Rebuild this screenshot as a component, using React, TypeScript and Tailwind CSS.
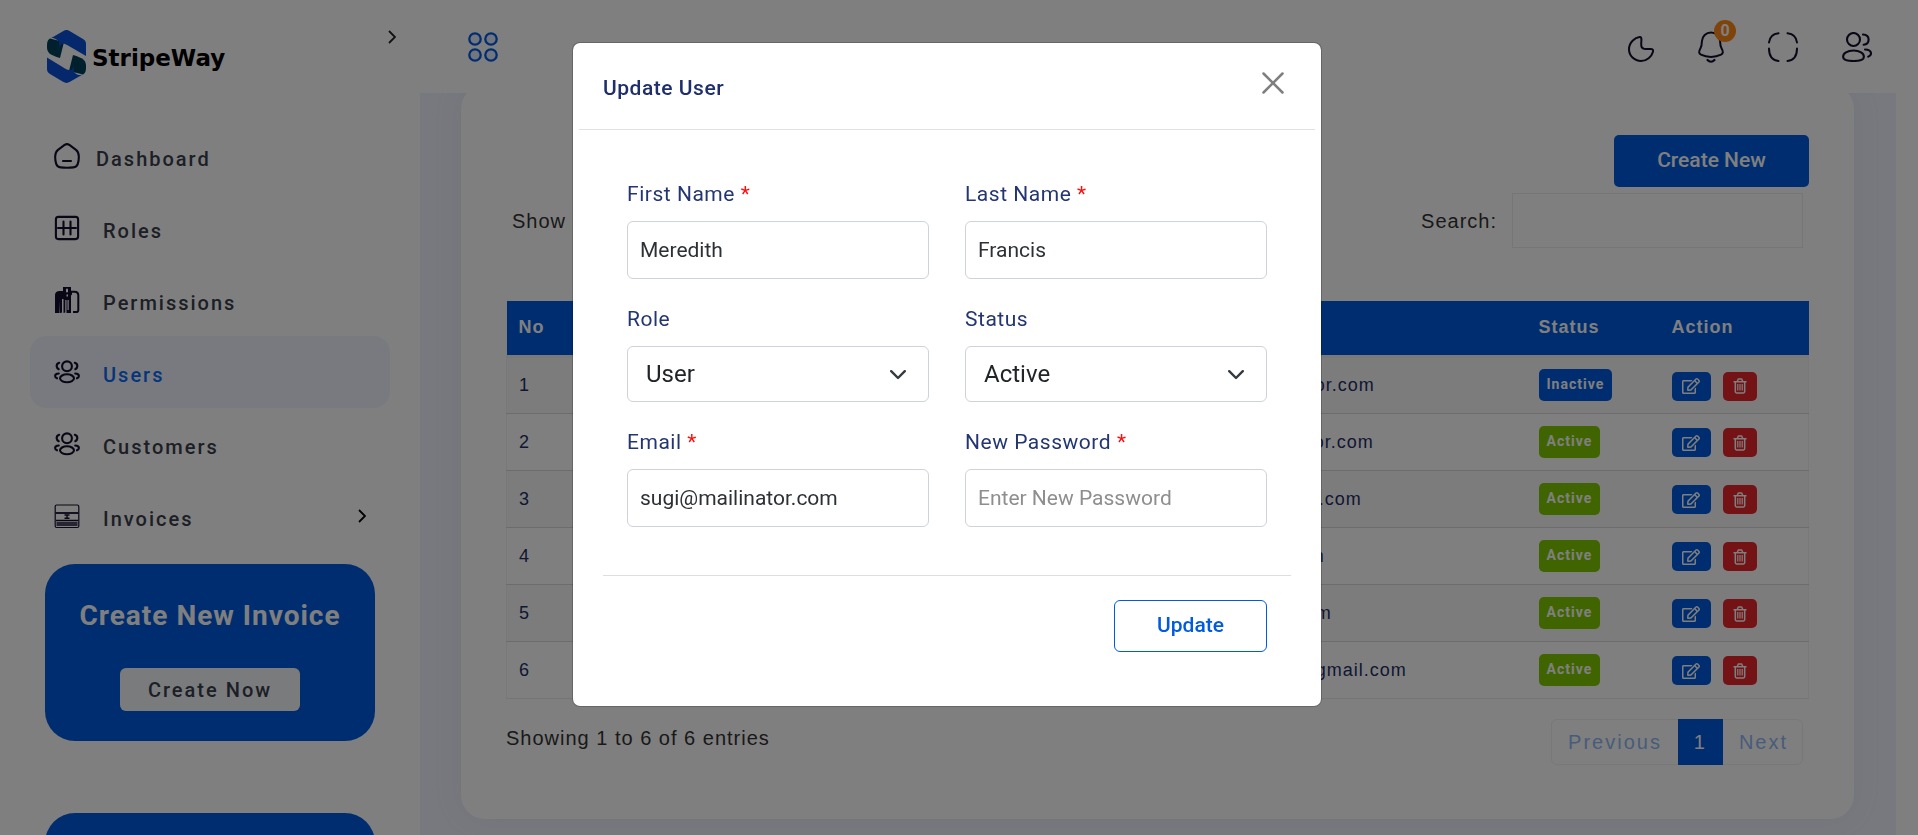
import { useState } from "react";
import clsx from "clsx";
import { FaRegEdit } from "react-icons/fa";

type IconProps = { className?: string };

const HomeIcon = ({ className }: IconProps) => (
  <svg viewBox="0 0 26 26" fill="none" stroke="currentColor" strokeWidth="2.1" className={className}>
    <path d="M10.6 1.9 4 6.8C2.2 8.2 1.3 10.4 1.2 13.2c-.1 2.3.2 5.2 1 7.7.8 2.4 2 3.3 4.4 3.5 4.2.4 8.6.4 12.8 0 2.4-.2 3.6-1.1 4.4-3.5.8-2.5 1.1-5.4 1-7.7-.1-2.8-1-5-2.800-6.400l-6.600-4.900c-1.600-1-3.200-1-4.800 0Z" />
    <path d="M9 18h8" strokeLinecap="round" />
  </svg>
);

const GridIcon = ({ className }: IconProps) => (
  <svg viewBox="0 0 26 26" fill="none" stroke="currentColor" strokeWidth="2.1" className={className}>
    <rect x="1.9" y="1.9" width="22.2" height="22.2" rx="2.5" />
    <path d="M4 13h18M9.500 6.500v13M16.500 6.500v13" strokeLinecap="round" />
  </svg>
);

const PermissionIcon = ({ className }: IconProps) => (
  <svg viewBox="0 0 26 26" fill="none" stroke="currentColor" strokeWidth="1.8" className={className}>
    <path d="M1 26V8c0-2.500 2-4 4.500-4H9V0h8v4h1v4.500l-1-1V26h-4.500V13h-1.200v12.500L9.500 26V12H8v13.500L6.500 26h-1V14l-.5 12Z" fill="currentColor" stroke="none" />
    <path d="M17 4.800h3.700c2.300 0 3.600 1.300 3.600 3.500v15c0 1-.8 1.800-1.800 1.800H19" strokeWidth="2" />
    <path d="M12 1.800h2v3.400h-2zM12.500 7.500h1.500v2h-1.500zM13.500 13h1.200v10h-1.200z" fill="#fff" stroke="none" />
  </svg>
);

const PeopleIcon = ({ className }: IconProps) => (
  <svg viewBox="0 0 26 24" fill="none" stroke="currentColor" strokeWidth="2.1" strokeLinecap="round" className={className}>
    <circle cx="13" cy="6.300" r="4.900" />
    <ellipse cx="13" cy="18.300" rx="7" ry="4" />
    <path d="M5.200 2.800C3.200 3.500 2.500 5 2.700 6.500s1 2.200 2 2.700M20.800 2.800c2 .7 2.700 2.200 2.500 3.700s-1 2.200-2 2.700" />
    <path d="M4.800 13.500c-2.300.1-3.700 1.200-3.700 2.500 0 1.200.8 1.900 1.900 2.300M21.200 13.500c2.300.1 3.700 1.200 3.700 2.500 0 1.200-.8 1.900-1.900 2.300" />
  </svg>
);

const InvoiceIcon = ({ className }: IconProps) => (
  <svg viewBox="0 0 26 26" fill="none" stroke="currentColor" strokeWidth="1.2" className={className}>
    <rect x="1.200" y="2" width="23.600" height="22.500" rx="1.500" />
    <path d="M1.500 10h23" strokeWidth="1.800" />
    <path d="M10.500 12h5M13 12v3M10.500 15.200h5M2 17.500h22M2.500 20h21M2.500 22h21" strokeWidth="1.400" />
  </svg>
);

const AppsIcon = ({ className }: IconProps) => (
  <svg viewBox="0 0 30 30" fill="#e9edff" stroke="currentColor" strokeWidth="2.300" className={className}>
    <circle cx="7" cy="7" r="5.700" />
    <circle cx="23" cy="7" r="5.700" />
    <circle cx="7" cy="23" r="5.700" />
    <circle cx="23" cy="23" r="5.700" />
  </svg>
);

const MoonIcon = ({ className }: IconProps) => (
  <svg viewBox="0 0 26 26" fill="none" stroke="currentColor" strokeWidth="2" strokeLinejoin="round" className={className}>
    <path d="M11.600 1C7 1.500 1 6.400 1 13.200c0 6.600 5.300 11.800 12.100 11.800 5.600 0 10.600-4.400 11.900-9.200.5-2-.5-2.900-2.300-2.900-2.400.1-4.200.2-6.700-.2-2-.4-2.600-1.200-2.700-3-.2-1.800 0-3.700.1-5.700.1-2.200-.3-3.100-1.800-3Z" />
  </svg>
);

const BellIcon = ({ className }: IconProps) => (
  <svg viewBox="0 0 26 32" fill="none" stroke="currentColor" strokeWidth="2" strokeLinecap="round" className={className}>
    <path d="M13 1.500c-5 0-8.800 3.800-9.100 8.700-.1 3.300-.1 4.800-1.300 6.900C.5 20.800.8 22.500 3 23.700c5.900 3 14.100 3 20 0 2.200-1.200 2.500-2.900.4-6.600-1.200-2.100-1.200-3.600-1.300-6.900C21.800 5.300 18 1.500 13 1.500Z" />
    <path d="M9.500 29c2 2.300 5 2.300 7 0" strokeWidth="2.200" />
  </svg>
);

const FullscreenIcon = ({ className }: IconProps) => (
  <svg viewBox="0 0 30 30" fill="none" stroke="currentColor" strokeWidth="2" strokeLinecap="round" className={className}>
    <path d="M10.500 1.200C5 1.800 1.600 5 1 10.500M19.500 1.200C25 1.800 28.400 5 29 10.500M1 16.500c0 7.500 3 11.800 9.500 12.400M29 16.500c0 7.500-3 11.800-9.500 12.400" />
  </svg>
);

const AccountIcon = ({ className }: IconProps) => (
  <svg viewBox="0 0 30 30" fill="none" stroke="currentColor" strokeWidth="2.100" strokeLinecap="round" className={className}>
    <circle cx="11.500" cy="7.500" r="6.500" />
    <path d="M11.500 18.500c-6.200 0-10.400 2.700-10.400 6.200 0 3.200 3.500 4.300 10.400 4.300s10.400-1.100 10.400-4.300c0-3.500-4.200-6.200-10.400-6.200Z" />
    <path d="M21 2.500c3.600.2 5.600 2.300 5.600 5.100 0 2.900-2 5-5 5.200M23 17.500c3.800.1 6 1.600 6 4.100 0 1.500-1 2.700-2.800 3.200" />
  </svg>
);

const TrashIcon = ({ className }: IconProps) => (
  <svg viewBox="0 0 14 16" fill="none" stroke="currentColor" strokeWidth="1.500" className={className}>
    <path d="M.5 3.700h13M2.300 3.700v9.800c0 .9.500 1.400 1.200 1.400h7c.7 0 1.200-.5 1.200-1.400V3.700M4.300 3.500l.8-2.200c.1-.3.300-.4.600-.4h2.600c.3 0 .5.1.6.4l.8 2.200" />
    <path d="M4.800 6v6.500M7 6v6.500M9.200 6v6.500" strokeWidth="1.200" />
  </svg>
);

const Chevron = ({ className }: IconProps) => (
  <svg viewBox="0 0 8 14" fill="none" stroke="currentColor" strokeWidth="1.800" className={className}>
    <path d="m1 1 6 6-6 6" />
  </svg>
);

const Logo = () => (
  <a href="#" className="flex items-center gap-1.5">
    <svg viewBox="0 0 39 53" className="h-[53px] w-[39px]">
      <path d="M3 8.500C0 10.500 0 13 0 17c0 6 3 8 13 11L17 12Z" fill="#01415c" />
      <path d="M36 44.500c3-2 3-4.500 3-8.500 0-6-3-8-13-11l-4 16Z" fill="#01415c" />
      <path d="M2.500 9 16 1.200c2.400-1.500 4.600-1.500 7 0L36 9c2 1.200 3 2.700 3 5v12L21 15.500c-5-3-8-2-8.500 3L12 12C8 7.500 5 7.500 2.500 9Z" fill="#0a4fd6" />
      <path d="M36.500 44 23 51.800c-2.400 1.500-4.600 1.500-7 0L3 44c-2-1.200-3-2.700-3-5V27.500L18 38.500c5 3 8 2 8.500-3l.5 6.500c4 4 7 3.500 9.500 2Z" fill="#0a4fd6" />
    </svg>
    <span className="pt-1 font-['DejaVu_Sans'] text-[23px] leading-none font-bold text-black">StripeWay</span>
  </a>
);

const navItems = [
  { label: "Dashboard", icon: HomeIcon, wide: false },
  { label: "Roles", icon: GridIcon, wide: true },
  { label: "Permissions", icon: PermissionIcon, wide: true },
  { label: "Users", icon: PeopleIcon, wide: true },
  { label: "Customers", icon: PeopleIcon, wide: true },
  { label: "Invoices", icon: InvoiceIcon, wide: true, more: true },
];

const users = [
  { name: "Kyra Boyd", role: "User", email: "kyra@mailinator.com", active: false },
  { name: "Meredith Francis", role: "User", email: "sugi@mailinator.com", active: true },
  { name: "Sly Moore", role: "User", email: "sly@mailinator.com", active: true },
  { name: "Lee Grant", role: "User", email: "lee@gmail.com", active: true },
  { name: "Lara Quinn", role: "User", email: "lara@gmail.com", active: true },
  { name: "Customer Lee", role: "User", email: "customerlee@gmail.com", active: true },
];

const InvoiceCard = () => (
  <div className="flex shrink-0 flex-col items-center rounded-[30px] bg-[#005be0] pt-[34px] pb-[30px]">
    <h3 className="text-[28px] leading-9 font-bold tracking-[1px] text-white">Create New Invoice</h3>
    <button className="mt-[34px] h-[43px] w-[180px] rounded-md bg-[#f5f6fb] text-xl font-medium tracking-[2px] text-[#3a3e4c]">
      Create Now
    </button>
  </div>
);

const Sidebar = () => (
  <aside className="flex w-[420px] shrink-0 flex-col overflow-hidden bg-white">
    <div className="flex items-start justify-between pt-[30px] pr-6 pl-[47px]">
      <Logo />
      <button aria-label="Collapse menu" className="text-[#222]">
        <Chevron className="h-[14px] w-2" />
      </button>
    </div>

    <nav className="mt-[37px] px-[30px]">
      {navItems.map(({ label, icon: Icon, wide, more }) => (
        <a
          key={label}
          href="#"
          className={clsx(
            "flex h-[72px] items-center rounded-2xl px-6 text-xl font-medium tracking-[2px]",
            label === "Users" ? "bg-[#f3f5fe] text-[#0c6bf5]" : "text-[#3a3e4c]",
          )}
        >
          <Icon className="size-[26px] text-[#120f2d]" />
          <span className={clsx("mt-1.5", wide ? "ml-[23px]" : "ml-4")}>{label}</span>
          {more && <Chevron className="ml-auto h-[14px] w-2 text-black" />}
        </a>
      ))}
    </nav>

    <div className="mt-3 flex flex-col gap-[72px] px-[45px]">
      <InvoiceCard />
      <InvoiceCard />
    </div>
  </aside>
);

const Topbar = () => (
  <header className="relative z-10 flex h-[93px] shrink-0 items-center justify-between bg-white pr-[46px] pl-12 text-[#120f2d]">
    <button aria-label="Apps" className="text-[#005be0]">
      <AppsIcon className="size-[30px]" />
    </button>
    <div className="flex items-center gap-11">
      <button aria-label="Dark mode" className="pt-1">
        <MoonIcon className="size-[26px]" />
      </button>
      <button aria-label="Notifications" className="relative">
        <BellIcon className="h-8 w-[26px]" />
        <span className="absolute -top-[11px] left-4 flex size-[22px] items-center justify-center rounded-full bg-[#ff8819] text-base font-bold text-white">
          0
        </span>
      </button>
      <button aria-label="Full screen">
        <FullscreenIcon className="size-[30px]" />
      </button>
      <button aria-label="Account">
        <AccountIcon className="size-[30px]" />
      </button>
    </div>
  </header>
);

const UsersTable = () => (
  <table className="mt-[53px] w-full table-fixed border-collapse text-left text-lg tracking-[1px] text-[#1f2f66]">
    <colgroup>
      <col className="w-[90px]" />
      <col />
      <col className="w-[160px]" />
      <col className="w-[351px]" />
      <col className="w-[133px]" />
      <col className="w-[149px]" />
    </colgroup>
    <thead>
      <tr className="h-[55px] bg-[#005be0] text-white">
        {["No", "Name", "Role", "Email", "Status", "Action"].map((head) => (
          <th key={head} className="px-3 pb-0.5 font-bold">
            {head}
          </th>
        ))}
      </tr>
    </thead>
    <tbody className="border-x border-t-3 border-[#f2f2f2]">
      {users.map((user, i) => (
        <tr key={user.email} className="h-[57px] border-b border-[#d8d8d8] odd:bg-[#f9f9f9] last:border-[#ebebeb]">
          <td className="px-3">{i + 1}</td>
          <td className="px-3">{user.name}</td>
          <td className="px-3">{user.role}</td>
          <td className="px-3">{user.email}</td>
          <td className="px-3">
            <span
              className={clsx(
                "inline-block h-8 rounded-[5px] px-2 align-middle font-['Roboto',sans-serif] text-sm leading-[30px] font-bold text-white",
                user.active ? "bg-[#7fc900]" : "bg-[#005be0]",
              )}
            >
              {user.active ? "Active" : "Inactive"}
            </span>
          </td>
          <td className="px-3">
            <div className="flex gap-3 pt-0.5">
              <button
                aria-label={`Edit user ${i + 1}`}
                className="flex h-[29px] w-[39px] items-center justify-center rounded-[5px] bg-[#005be0] text-white"
              >
                <FaRegEdit className="size-[18px]" />
              </button>
              <button
                aria-label={`Delete user ${i + 1}`}
                className="flex h-[29px] w-[34px] items-center justify-center rounded-[5px] bg-[#e8262b] text-white"
              >
                <TrashIcon className="h-4 w-[14px]" />
              </button>
            </div>
          </td>
        </tr>
      ))}
    </tbody>
  </table>
);

const UsersCard = () => (
  <section className="-mt-2 rounded-3xl bg-white px-[45px] pt-[50px] pb-[54px] font-['Liberation_Sans',sans-serif] text-xl tracking-[1px] text-[#333] shadow-[0_0_30px_#e6e8f5]">
    <div className="flex justify-end">
      <button className="h-[52px] w-[195px] rounded-[5px] bg-[#005be0] font-['Roboto',sans-serif] text-[21px] font-medium tracking-normal text-white">
        Create New
      </button>
    </div>

    <div className="mt-1.5 flex items-center justify-between px-1.5">
      <label className="flex items-center gap-2">
        Show
        <select className="h-10 border border-[#eee] px-2">
          <option>10</option>
        </select>
        entries
      </label>
      <label className="flex items-center gap-[15px]">
        Search:
        <input type="search" className="h-[55px] w-[291px] border border-[#ececec] px-3 outline-none" />
      </label>
    </div>

    <UsersTable />

    <div className="mt-5 flex items-start justify-between pr-1.5">
      <p className="pt-1 leading-[30px]">Showing 1 to 6 of 6 entries</p>
      <div className="flex h-[46px] rounded-md border border-[#f0f0f0] tracking-[2px] text-[#8fb8f5]">
        <button className="px-4">Previous</button>
        <button className="-my-px w-[45px] bg-[#005be0] text-white">1</button>
        <button className="pr-[14px] pl-4">Next</button>
      </div>
    </div>
  </section>
);

type FieldProps = {
  id: string;
  label: string;
  required?: boolean;
  children: React.ReactNode;
};

const Field = ({ id, label, required, children }: FieldProps) => (
  <div>
    <label htmlFor={id} className="mb-3 block text-[21px] leading-[30px] tracking-wide text-[#243672]">
      {label} {required && <span className="text-[#ff0d0d]">*</span>}
    </label>
    {children}
  </div>
);

const inputClass =
  "block h-[58px] w-full rounded-md border border-[#ced2da] px-3 text-[21px] text-[#2d3136] outline-none placeholder:text-[#8e8e8e]";

const SelectBox = ({ id, options }: { id: string; options: string[] }) => (
  <div className="relative">
    <select
      id={id}
      className="block h-14 w-full appearance-none rounded-md border border-[#ced2da] bg-white px-[18px] text-2xl text-[#212529] outline-none"
    >
      {options.map((option) => (
        <option key={option}>{option}</option>
      ))}
    </select>
    <svg
      viewBox="0 0 16 10"
      fill="none"
      stroke="#343a40"
      strokeWidth="2.400"
      strokeLinecap="round"
      strokeLinejoin="round"
      className="pointer-events-none absolute top-6 right-[23px] h-[10px] w-4"
    >
      <path d="m1.200 1.200 6.800 6.800 6.800-6.800" />
    </svg>
  </div>
);

const UpdateUserModal = () => {
  const [form, setForm] = useState({
    firstName: "Meredith",
    lastName: "Francis",
    email: "sugi@mailinator.com",
    password: "",
  });

  const handleChange = (e: React.ChangeEvent<HTMLInputElement>) =>
    setForm({ ...form, [e.target.name]: e.target.value });

  return (
    <div className="fixed inset-0 z-20 flex items-start justify-center bg-black/50 pt-[42px] pr-[24px]">
      <div role="dialog" aria-labelledby="modal-title" className="w-[750px] rounded-lg border border-black/20 bg-white bg-clip-padding">
        <div className="mx-1.5 flex h-[87px] items-start justify-between border-b border-[#dee2e6] pt-[29px] pr-[31px] pl-6">
          <h5 id="modal-title" className="text-[21px] leading-8 font-medium tracking-wide text-[#1f2f6b]">
            Update User
          </h5>
          <button aria-label="Close" className="text-[#7f7f7f]">
            <svg viewBox="0 0 22 22" stroke="currentColor" strokeWidth="2.500" strokeLinecap="round" className="size-[22px]">
              <path d="m1.500 1.500 19 19M20.500 1.500l-19 19" />
            </svg>
          </button>
        </div>

        <form onSubmit={(e) => e.preventDefault()} className="px-[30px] pt-[49px] pb-[54px]">
          <div className="grid grid-cols-2 gap-x-9 gap-y-[25px] px-6">
            <Field id="firstName" label="First Name" required>
              <input id="firstName" name="firstName" value={form.firstName} onChange={handleChange} className={inputClass} />
            </Field>
            <Field id="lastName" label="Last Name" required>
              <input id="lastName" name="lastName" value={form.lastName} onChange={handleChange} className={inputClass} />
            </Field>
            <Field id="role" label="Role">
              <SelectBox id="role" options={["User", "Admin"]} />
            </Field>
            <Field id="status" label="Status">
              <SelectBox id="status" options={["Active", "Inactive"]} />
            </Field>
            <Field id="email" label="Email" required>
              <input id="email" name="email" type="email" value={form.email} onChange={handleChange} className={inputClass} />
            </Field>
            <Field id="password" label="New Password" required>
              <input
                id="password"
                name="password"
                type="password"
                placeholder="Enter New Password"
                value={form.password}
                onChange={handleChange}
                className={inputClass}
              />
            </Field>
          </div>

          <div className="mt-12 flex justify-end border-t border-[#dcdfe2] pt-6 pr-6">
            <button
              type="submit"
              className="h-[52px] w-[153px] rounded-md border border-[#005be0] text-[21px] font-medium text-[#005be0]"
            >
              Update
            </button>
          </div>
        </form>
      </div>
    </div>
  );
};

const App = () => (
  <div className="flex h-screen overflow-hidden bg-white font-['Roboto',sans-serif]">
    <Sidebar />
    <main className="flex min-w-0 flex-1 flex-col">
      <Topbar />
      <div className="mr-[22px] flex-1 bg-[#f0f2fc] pr-[42px] pl-[41px]">
        <UsersCard />
      </div>
    </main>
    <UpdateUserModal />
  </div>
);

export default App;
